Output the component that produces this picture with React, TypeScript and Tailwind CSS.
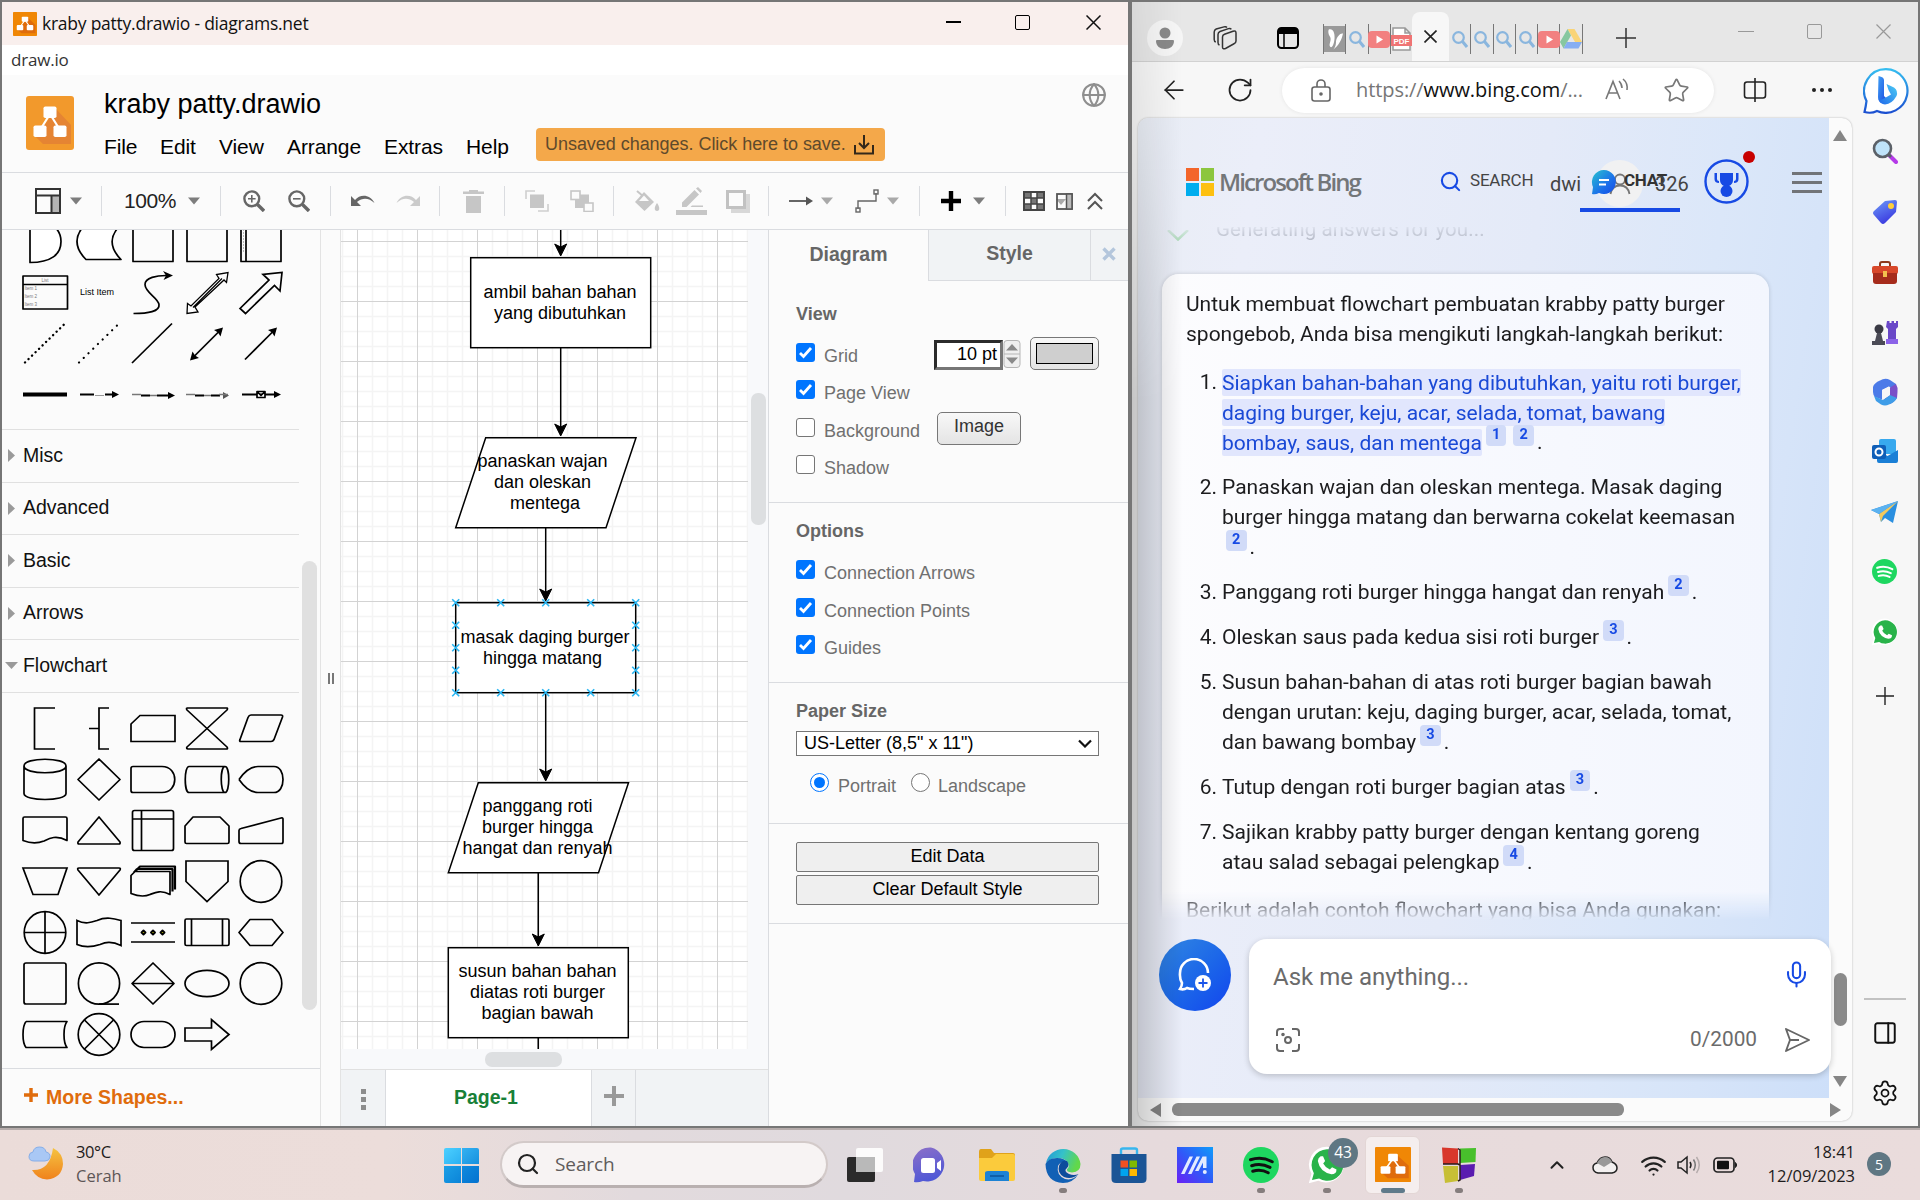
import React from "react";
import {
  Search, X, ArrowLeft, RotateCw, Star, Settings, Wifi, ChevronUp, Mic, PanelRight, Globe,
} from "lucide-react";

type Kids = { children?: React.ReactNode };

/* ---------- shared logo ---------- */

function DrawioLogo({ className, flat }: { className: string; flat?: boolean }) {
  return (
    <svg className={className} viewBox="0 0 48 54" preserveAspectRatio="none">
      <rect width="48" height="54" rx={flat ? 3 : 1.5} fill={flat ? "#f2992c" : "#f08705"} />
      <path d="M30 13 L45 29 V48 H17 L8 39 L20 27 Z" fill={flat ? "#e58433" : "#df6c0c"} />
      <path d="M24 18 L14 34 M24 18 L34 34" stroke="#fff" strokeWidth="2.2" />
      <rect x="17.5" y="10.5" width="13" height="11.5" rx="1.8" fill="#fff" />
      <rect x="7.5" y="29.5" width="13" height="11.5" rx="1.8" fill="#fff" />
      <rect x="27.5" y="29.5" width="13" height="11.5" rx="1.8" fill="#fff" />
    </svg>
  );
}

/* ---------- toolbar ---------- */

function Caret({ className, color = "#7d7d7d" }: { className: string; color?: string }) {
  return (
    <svg className={"h-[8px] w-[12px] shrink-0 " + className} viewBox="0 0 12 8">
      <path d="M0 0.5 H12 L6 7.5 Z" fill={color} />
    </svg>
  );
}

function Sep({ className }: { className: string }) {
  return <div className={"h-[30px] w-px shrink-0 bg-[#dadce0] " + className} />;
}

function Toolbar() {
  return (
    <div className="flex h-[57px] shrink-0 items-center border-b border-[#dadce0] bg-[#fbfbfb]">
      <svg className="ml-[33px] h-[26px] w-[26px] shrink-0" viewBox="0 0 26 26" fill="none" stroke="#333" strokeWidth="2">
        <rect x="17" y="8" width="8" height="17" fill="#b5b5b5" stroke="none" />
        <rect x="1" y="1" width="24" height="24" />
        <path d="M1 7.5 H25 M16.5 7.5 V25" />
      </svg>
      <Caret className="ml-[9px]" />
      <Sep className="ml-[19px]" />
      <span className="ml-[22px] w-[53px] shrink-0 text-[21px] tracking-[-0.4px] text-[#222]">100%</span>
      <Caret className="ml-[11px]" />
      <Sep className="ml-[20px]" />
      <svg className="ml-[22px] h-[22px] w-[22px] shrink-0" viewBox="0 0 22 22" fill="none" stroke="#666" strokeWidth="2.4">
        <circle cx="8.8" cy="8.8" r="7.4" />
        <path d="M14.5 14.5 L21 21" strokeWidth="3.4" />
        <path d="M5 8.8 H12.6 M8.8 5 V12.6" strokeWidth="1.6" />
      </svg>
      <svg className="ml-[23px] h-[22px] w-[22px] shrink-0" viewBox="0 0 22 22" fill="none" stroke="#666" strokeWidth="2.4">
        <circle cx="8.8" cy="8.8" r="7.4" />
        <path d="M14.5 14.5 L21 21" strokeWidth="3.4" />
        <path d="M5 8.8 H12.6" strokeWidth="1.6" />
      </svg>
      <Sep className="ml-[20px]" />
      <svg className="ml-[20px] h-[14px] w-[24px] shrink-0" viewBox="0 0 24 14">
        <path d="M0 2 V12 H10 L6 8 C12 3 18 4 23.5 9 C19 0 9 0 4 6 Z" fill="#666" />
      </svg>
      <svg className="ml-[21px] h-[14px] w-[24px] shrink-0" viewBox="0 0 24 14">
        <path d="M24 2 V12 H14 L18 8 C12 3 6 4 0.5 9 C5 0 15 0 20 6 Z" fill="#cbcbcb" />
      </svg>
      <Sep className="ml-[19px]" />
      <svg className="ml-[23px] h-[23px] w-[21px] shrink-0" viewBox="0 0 21 23">
        <path d="M0 1.5 H6 V0 H15 V1.5 H21 V4 H0 Z M3 6 H18 V23 H3 Z" fill="#c6c6c6" />
      </svg>
      <Sep className="ml-[20px]" />
      <svg className="ml-[20px] h-[22px] w-[24px] shrink-0" viewBox="0 0 24 22" fill="none" stroke="#cfcfcf" strokeWidth="1.6">
        <path d="M1 9 V1 H10 M23 14 V21 H13" />
        <rect x="5" y="4.5" width="14" height="13.5" fill="#c6c6c6" stroke="none" />
      </svg>
      <svg className="ml-[21px] h-[22px] w-[24px] shrink-0" viewBox="0 0 24 22" fill="none" stroke="#c6c6c6" strokeWidth="1.6">
        <rect x="5" y="4.5" width="14" height="13.5" fill="#c6c6c6" stroke="none" />
        <rect x="1" y="1" width="9" height="8.5" fill="#fbfbfb" />
        <rect x="14" y="13" width="9" height="8.5" fill="#fbfbfb" />
      </svg>
      <Sep className="ml-[19px]" />
      <svg className="ml-[21px] h-[24px] w-[25px] shrink-0" viewBox="0 0 25 24" fill="#c6c6c6">
        <path d="M2 2 L9 8" stroke="#c6c6c6" strokeWidth="2" />
        <path d="M9 3 L19 13 L9.5 22 L0 13 Z" />
        <path d="M9 6.5 L14 12 H4 Z" fill="#fbfbfb" />
        <path d="M22 14 C25 18 25 22 22 22 C19 22 19 18 22 14" />
      </svg>
      <svg className="ml-[16px] h-[28px] w-[31px] shrink-0" viewBox="0 0 31 28" fill="#c6c6c6">
        <path d="M6 20 V15.5 L18.5 3 L23 7.5 L10.5 20 Z M20 1.5 L22 0 L26 4 L24.5 6 Z M16 18.5 H27 V20 H14.5 Z" />
        <rect y="23" width="31" height="5" />
      </svg>
      <svg className="ml-[19px] h-[23px] w-[24px] shrink-0" viewBox="0 0 24 23" fill="none">
        <path d="M20 4 H24 V23 H5 V19 H20 Z" fill="#d8d8d8" />
        <rect x="1.5" y="1.5" width="17" height="16" stroke="#c2c2c2" strokeWidth="3" />
      </svg>
      <Sep className="ml-[18px]" />
      <svg className="ml-[20px] h-[10px] w-[24px] shrink-0" viewBox="0 0 24 10">
        <path d="M0 5 H19" stroke="#555" strokeWidth="1.8" />
        <path d="M17 0.5 L24 5 L17 9.5 Z" fill="#555" />
      </svg>
      <Caret className="ml-[8px]" color="#a9a9a9" />
      <svg className="ml-[22px] h-[24px] w-[24px] shrink-0" viewBox="0 0 24 24" fill="none" stroke="#666" strokeWidth="1.4">
        <path d="M3 20 V12 H21 V4" />
        <rect x="1" y="19" width="4" height="4" />
        <rect x="19" y="1" width="4" height="4" />
      </svg>
      <Caret className="ml-[8px]" color="#a9a9a9" />
      <Sep className="ml-[20px]" />
      <svg className="ml-[21px] h-[20px] w-[20px] shrink-0" viewBox="0 0 20 20">
        <path d="M10 0 V20 M0 10 H20" stroke="#000" strokeWidth="4.4" />
      </svg>
      <Caret className="ml-[12px]" />
      <Sep className="ml-[20px]" />
      <svg className="ml-[17px] h-[20px] w-[22px] shrink-0" viewBox="0 0 22 20">
        <rect x="1" y="1" width="20" height="18" fill="#fbfbfb" stroke="#444" strokeWidth="2" />
        <path d="M2 2 H8 V7 H2 Z M14 2 H20 V7 H14 Z M8 7 H14 V13 H8 Z M2 13 H8 V18 H2 Z M14 13 H20 V18 H14 Z" fill="#777" />
        <path d="M8 1 V19 M14 1 V19 M1 7 H21 M1 13 H21" stroke="#444" strokeWidth="1.5" />
      </svg>
      <svg className="ml-[11px] h-[17px] w-[17px] shrink-0" viewBox="0 0 17 17">
        <path d="M0 6 H10 L5 12 Z" fill="#aaa" />
        <rect x="1" y="1" width="15" height="15" fill="none" stroke="#555" strokeWidth="1.8" />
        <path d="M10.5 1 H16 V16 H10.5 Z" fill="#bbb" stroke="#555" strokeWidth="1.5" />
      </svg>
      <svg className="ml-[14px] h-[18px] w-[16px] shrink-0" viewBox="0 0 16 18" fill="none" stroke="#555" strokeWidth="2">
        <path d="M1 9 L8 2 L15 9 M1 17 L8 10 L15 17" />
      </svg>
    </div>
  );
}

/* ---------- shape palette ---------- */

function Cell({ children, w = 1.7 }: Kids & { w?: number }) {
  return (
    <svg className="h-[51px] w-[54px]" viewBox="-27 -25.5 54 51" fill="none" stroke="#000" strokeWidth={w} strokeLinejoin="round">
      {children}
    </svg>
  );
}

function GeneralShapes() {
  return (
    <div className="ml-[15.5px] -mt-[14px] grid grid-cols-[repeat(5,54px)]">
      <Cell><path d="M-15 -21 V21 C6 21 16 13 16 0 C16 -13 6 -21 -15 -21" fill="#fff" /></Cell>
      <Cell><path d="M-13 -18 H23 C10 -6 10 6 22 18 H-13 C-25 6 -25 -6 -13 -18" fill="#fff" /></Cell>
      <Cell><path d="M-20 -20 H20 V20 H-20 Z" /></Cell>
      <Cell><path d="M-20 -20 H20 V20 H-20 Z" /></Cell>
      <Cell>
        <path d="M-20 -20 H20 V20 H-20 Z M-15 -20 V20" />
        <path d="M-17.5 -18 V12" strokeWidth="1" strokeDasharray="1 2" stroke="#777" />
      </Cell>
      <Cell>
        <path d="M-22 -16.5 H22.5 V16.5 H-22 Z M-22 -8 H22.5" />
        <g fill="#777" stroke="none" fontSize="4.5">
          <text x="0" y="-11" textAnchor="middle">List</text>
          <text x="-20.5" y="-2.5">Item 1</text>
          <text x="-20.5" y="5.5">Item 2</text>
          <text x="-20.5" y="13.5">Item 3</text>
        </g>
      </Cell>
      <Cell><text x="-2" y="2.5" textAnchor="middle" fontSize="9" fill="#000" stroke="none">List Item</text></Cell>
      <Cell>
        <path d="M-19.5 21 C-5 21 7 19 6 12 C5 5 -8 0 -8 -8 C-8 -15 4 -17 13 -17" />
        <path d="M20 -17 L10 -21.5 L13 -17 L10.5 -12.5 Z" fill="#000" stroke="none" />
      </Cell>
      <Cell>
        <path d="M-20 21 L-19.5 11 L-16 13.5 L12 -14 L9.5 -18 L21 -20 L19.5 -10 L17 -12.5 L-12 14.5 L-9 19.5 Z M-14 15 L15 -14" strokeWidth="1.3" strokeLinejoin="miter" />
      </Cell>
      <Cell><path d="M-21 16 L8 -12.5 L2 -18 L21 -20 L19 -1.5 L13.5 -7 L-15.5 21 Z" strokeLinejoin="miter" /></Cell>
      <Cell w={2}><path d="M-20 19 L19 -19" strokeDasharray="0.1 4.8" strokeLinecap="round" strokeWidth="2.4" /></Cell>
      <Cell w={2}><path d="M-20 19 L18 -18" strokeDasharray="0.1 6.5" strokeLinecap="round" strokeWidth="2.2" /></Cell>
      <Cell><path d="M-21 19.5 L19 -20" /></Cell>
      <Cell>
        <path d="M-13 13 L13 -13" />
        <path d="M-17 17 L-14.5 8 L-12 12 L-8 14.5 Z M16 -16 L13.5 -7 L11 -11 L7 -13.5 Z" fill="#000" stroke="none" />
      </Cell>
      <Cell>
        <path d="M-16 16 L12 -12" />
        <path d="M16 -16 L13.5 -7 L11 -11 L7 -13.5 Z" fill="#000" stroke="none" />
      </Cell>
      <Cell><path d="M-22 0 H22" strokeWidth="4" /></Cell>
      <Cell>
        <path d="M-19 0 H-5 M6 0 H15" strokeWidth="2" />
        <path d="M20 0 L13 -3.5 V3.5 Z" fill="#000" stroke="none" />
        <path d="M-4 1 H5" stroke="#999" strokeWidth="1" />
      </Cell>
      <Cell>
        <path d="M-12 1 H-3 M4 1 H15" strokeWidth="2" />
        <path d="M22 1 L15 -2.5 V4.5 Z" fill="#000" stroke="none" />
        <path d="M-21 0 H-12 M-3 1 H4" stroke="#777" strokeWidth="1.5" />
      </Cell>
      <Cell>
        <path d="M-12 1 H-3 M4 1 H13" strokeWidth="2" />
        <path d="M22 1 L16 -2.5 V4.5 Z" fill="#555" stroke="none" />
        <path d="M-21 0 H-12 M-3 1 H4 M12 0 H21" stroke="#777" strokeWidth="1.5" />
      </Cell>
      <Cell>
        <path d="M-19 0 H14" strokeWidth="2" />
        <path d="M20 0 L13 -3.5 V3.5 Z" fill="#000" stroke="none" />
        <path d="M-4 -3 H4 V3 H-4 Z M-4 -3 L0 1 L4 -3" fill="#fff" />
      </Cell>
    </div>
  );
}

function FlowchartShapes() {
  return (
    <div className="ml-[15.7px] mt-[9.5px] grid grid-cols-[repeat(5,54px)]">
      <Cell><path d="M10 -20.5 H-10.5 V20.5 H10" strokeLinejoin="miter" /></Cell>
      <Cell><path d="M10 -20.5 H0 V20.5 H10 M-10 0 H0" strokeLinejoin="miter" /></Cell>
      <Cell><path d="M-13 -13 H22 V13 H-22 V-4.5 Z" strokeLinejoin="miter" /></Cell>
      <Cell><path d="M-20 -20.5 H20 Q21 -20 20 -18.5 L-20 18.5 Q-21 20 -19 20.5 H20 Q21 20 20 18.5 L-20 -18.5 Q-21 -20 -20 -20.5" /></Cell>
      <Cell><path d="M-10 -13.5 H20 Q22 -13.5 21.5 -11.5 L13 11 Q12 13 10 13 H-20 Q-22 13 -21 11 L-13 -11 Q-12 -13.5 -10 -13.5" /></Cell>

      <Cell><path d="M-21 -13.5 C-21 -22.5 21 -22.5 21 -13.5 V14 C21 22 -21 22 -21 14 Z M-21 -13.5 C-21 -4.5 21 -4.5 21 -13.5" /></Cell>
      <Cell><path d="M0 -20.5 L21 0 L0 20.5 L-21 0 Z" /></Cell>
      <Cell><path d="M-20 -13 H9 C26 -13 26 13 9 13 H-20 Q-22 13 -22 11 V-11 Q-22 -13 -20 -13" /></Cell>
      <Cell><path d="M-18 -13 H18 C23 -13 23 13 18 13 H-18 C-23 13 -23 -13 -18 -13 M18 -13 C13 -13 13 13 18 13" /></Cell>
      <Cell><path d="M-22 0 Q-13 -13 -3 -13 H13 C25 -13 25 13 13 13 H-3 Q-13 13 -22 0" /></Cell>

      <Cell><path d="M-20.5 -13.5 H20.5 Q22 -13.5 22 -12 V10 C11 4 4 8 -1 10.5 C-10 14 -17 12 -22 10 V-12 Q-22 -13.5 -20.5 -13.5" /></Cell>
      <Cell><path d="M0 -13.5 L21 11.5 Q21.5 13.5 20 13.5 H-20 Q-21.5 13.5 -21 11.5 Z" /></Cell>
      <Cell><path d="M-18.5 -20 H18.5 Q20.5 -20 20.5 -18 V18 Q20.5 20 18.5 20 H-18.5 Q-20.5 20 -20.5 18 V-18 Q-20.5 -20 -18.5 -20 M-11.5 -20 V20 M-20.5 -11.5 H20.5" /></Cell>
      <Cell><path d="M-14 -13.5 H13 L22 -4.5 V11.5 Q22 13 20.5 13 H-20.5 Q-22 13 -22 11.5 V-4.5 Z" /></Cell>
      <Cell><path d="M-20 -2 L20 -12.5 Q22 -13 22 -11.5 V11 Q22 13 20.5 13 H-20 Q-22 13 -22 11 V0 Q-22 -1.5 -20 -2" /></Cell>

      <Cell><path d="M-22 -13.5 H22 L13 13 H-12 Z" strokeLinejoin="miter" /></Cell>
      <Cell><path d="M-20 -13.5 H20 Q22 -13.5 21 -11.5 L0 13.5 L-21 -11.5 Q-22 -13.5 -20 -13.5" /></Cell>
      <Cell>
        <path d="M-17 -11 L-13 -15 H22 V8 M-19 -9 L-16 -12.5 H19.5 V10" strokeWidth="2.2" />
        <path d="M-18 -10 H17 V13 C8 8 2 11 -3 13 C-10 16 -17 14 -22 12 V-6 Z" fill="#fbfbfb" />
      </Cell>
      <Cell><path d="M-21 -20.5 H21 V0 L0 20 L-21 0 Z" strokeLinejoin="miter" /></Cell>
      <Cell><circle r="20.8" /></Cell>

      <Cell><circle r="20.8" /><path d="M-20.8 0 H20.8 M0 -20.8 V20.8" /></Cell>
      <Cell><path d="M-22 -12 C-14 -8 -8 -10 -2 -12 C7 -16 15 -14 22 -12 V13 C12 8 6 10 1 12 C-8 15 -15 15 -22 12 Z" strokeLinejoin="miter" /></Cell>
      <Cell>
        <path d="M-22 -9.5 H22 M-22 9.5 H22" />
        <path d="M-9.5 -2 L-7.5 0 L-9.5 2 L-11.5 0 Z M0 -2 L2 0 L0 2 L-2 0 Z M9.5 -2 L11.5 0 L9.5 2 L7.5 0 Z" fill="#aeb000" strokeWidth="1.9" />
      </Cell>
      <Cell><path d="M-20.5 -13.5 H20.5 Q22 -13.5 22 -12 V11.5 Q22 13 20.5 13 H-20.5 Q-22 13 -22 11.5 V-12 Q-22 -13.5 -20.5 -13.5 M-15.5 -13.5 V13 M15.5 -13.5 V13" /></Cell>
      <Cell><path d="M-11 -13 H11 L22 0 L11 13 H-11 L-22 0 Z" /></Cell>

      <Cell><rect x="-21" y="-20.5" width="42" height="41" rx="2" /></Cell>
      <Cell><circle r="20.6" /><path d="M0 20.6 H20" /></Cell>
      <Cell><path d="M0 -20.5 L21 0 L0 20.5 L-21 0 Z M-21 0 H21" /></Cell>
      <Cell><ellipse rx="22" ry="13.2" /></Cell>
      <Cell><circle r="20.8" /></Cell>

      <Cell><path d="M-19 -13 H22 C18 -8 18 8 22 13 H-19 C-23 8 -23 -8 -19 -13" /></Cell>
      <Cell><circle r="20.8" /><path d="M-14.5 -14.5 L14.5 14.5 M14.5 -14.5 L-14.5 14.5" /></Cell>
      <Cell><rect x="-22" y="-13" width="44" height="26" rx="13" /></Cell>
      <Cell><path d="M-22 -6.5 H4.5 V-15 L22 0 L4.5 15 V6.5 H-22 Z" strokeLinejoin="miter" /></Cell>
    </div>
  );
}

function Section({ label, className, open }: { label: string; className: string; open?: boolean }) {
  return (
    <div className={"flex w-[297px] items-center border-t border-[#e0e0e0] pb-px " + className}>
      <svg className="ml-[3px] h-[13px] w-[13px]" viewBox="0 0 13 13">
        <path d={open ? "M0 3 H13 L6.5 10 Z" : "M3 0 L10 6.5 L3 13 Z"} fill="#9a9a9a" />
      </svg>
      <span className="ml-[5px] text-[19.5px] tracking-[-0.05px] text-[#111]">{label}</span>
    </div>
  );
}

function ShapeSidebar() {
  return (
    <div className="flex w-[319px] shrink-0 flex-col border-r border-[#e3e3e3] bg-[#fbfbfb]">
      <div className="flex h-[838px] shrink-0">
        <div className="w-[300px] overflow-hidden">
          <div className="flex h-[199px] items-start">
            <GeneralShapes />
          </div>
          <Section label="Misc" className="h-[53px]" />
          <Section label="Advanced" className="h-[52px]" />
          <Section label="Basic" className="h-[53px]" />
          <Section label="Arrows" className="h-[52px]" />
          <Section label="Flowchart" className="h-[53px]" open />
          <div className="w-[297px] border-t border-[#e0e0e0]">
            <FlowchartShapes />
          </div>
        </div>
        <div className="mt-[331px] h-[449px] w-[15px] rounded-full bg-[#e0e0e0]" />
      </div>
      <div className="flex grow items-center border-t border-[#dadce0] pl-[22px] text-[#e06c0c]">
        <svg className="mb-[5px] h-[14px] w-[14px]" viewBox="0 0 14 14">
          <path d="M7 0 V14 M0 7 H14" stroke="#e06c0c" strokeWidth="3.4" />
        </svg>
        <span className="ml-[8px] text-[19.5px] font-bold">More Shapes...</span>
      </div>
    </div>
  );
}

/* ---------- diagram canvas ---------- */

const connectionPoints: [number, number][] = [
  [0, 0], [45, 0], [90, 0], [135, 0], [180, 0],
  [0, 22.5], [0, 45], [0, 67.5], [180, 22.5], [180, 45], [180, 67.5],
  [0, 90], [45, 90], [90, 90], [135, 90], [180, 90],
];

function Arrow({ x, y1, y2 }: { x: number; y1: number; y2: number }) {
  return (
    <g>
      <path d={`M${x} ${y1} V${y2 - 8}`} stroke="#000" strokeWidth="1.5" />
      <path d={`M${x} ${y2 - 1} L${x - 6} ${y2 - 13} L${x} ${y2 - 10} L${x + 6} ${y2 - 13} Z`} fill="#000" stroke="#000" />
    </g>
  );
}

function Lines({ items }: { items: [string, number, number][] }) {
  return (
    <>
      {items.map(([t, x, y]) => (
        <text key={t} x={x} y={y} textAnchor="middle" fontSize="18" fill="#000">{t}</text>
      ))}
    </>
  );
}

function Canvas() {
  return (
    <svg className="h-[819px] w-[407px] bg-white" viewBox="341 230 407 819">
      <defs>
        <pattern id="grid" x="357" y="241" width="60" height="60" patternUnits="userSpaceOnUse">
          <path d="M15.5 0 V60 M30.5 0 V60 M45.5 0 V60 M0 15.5 H60 M0 30.5 H60 M0 45.5 H60" stroke="#f4f4f4" strokeWidth="1.5" fill="none" />
          <path d="M0.5 0 V60 M0 0.5 H60" stroke="#d3d3d3" fill="none" />
        </pattern>
      </defs>
      <rect x="341" y="230" width="407" height="819" fill="url(#grid)" />
      <g fill="#fff" stroke="#000" strokeWidth="1.5">
        <rect x="470.7" y="257.7" width="180" height="90" />
        <path d="M485.7 437.7 H636 L606 527.7 H455.7 Z" />
        <rect x="455.7" y="602.7" width="180" height="90" />
        <path d="M478.3 782.7 H628.5 L598.5 872.7 H448.3 Z" />
        <rect x="448.3" y="947.7" width="180" height="90" />
      </g>
      <Arrow x={560.7} y1={230} y2={257} />
      <Arrow x={560.7} y1={348} y2={437} />
      <Arrow x={545.7} y1={528} y2={602} />
      <Arrow x={545.7} y1={693} y2={782} />
      <Arrow x={538.3} y1={873} y2={947} />
      <path d="M538.3 1038 V1049" stroke="#000" strokeWidth="1.5" />
      <Lines
        items={[
          ["ambil bahan bahan", 560, 298],
          ["yang dibutuhkan", 560, 319],
          ["panaskan wajan", 542.5, 467],
          ["dan oleskan", 542.5, 488],
          ["mentega", 545, 509],
          ["masak daging burger", 545, 643],
          ["hingga matang", 542.5, 664],
          ["panggang roti", 537.5, 812],
          ["burger hingga", 537.5, 833],
          ["hangat dan renyah", 537.5, 854],
          ["susun bahan bahan", 537.5, 977],
          ["diatas roti burger", 537.5, 998],
          ["bagian bawah", 537.5, 1019],
        ]}
      />
      <g stroke="#29b6f2" strokeWidth="1.6">
        {connectionPoints.map(([x, y]) => (
          <path key={`${x}-${y}`} d={`M${x + 452.2} ${y + 599.2} l7 7 m0 -7 l-7 7`} />
        ))}
      </g>
    </svg>
  );
}

function DiagramArea() {
  return (
    <div className="flex w-[427px] shrink-0 flex-col bg-[#f8f9fb]">
      <div className="flex h-[819px] shrink-0">
        <Canvas />
        <div className="ml-[3px] mt-[163px] h-[132px] w-[15px] rounded-[7px] bg-[#dddfe1]" />
      </div>
      <div className="h-[20px] shrink-0 pt-[3px]">
        <div className="ml-[144px] h-[15px] w-[77px] rounded-[7px] bg-[#dddfe1]" />
      </div>
      <div className="flex grow items-stretch border-t border-[#e0e0e0] bg-[#f1f3f5]">
        <div className="flex w-[45px] flex-col items-center justify-center gap-[3px] border-r border-[#dadce0] pt-[3px]">
          <div className="size-[5px] bg-[#8d8d8d]" />
          <div className="size-[5px] bg-[#8d8d8d]" />
          <div className="size-[5px] bg-[#8d8d8d]" />
        </div>
        <div className="flex w-[206px] items-center justify-center border-r border-[#dadce0] bg-white pr-[5px] text-[19.5px] font-bold text-[#188038]">
          Page-1
        </div>
        <div className="flex w-[44px] items-center justify-center border-r border-[#dadce0]">
          <svg className="mb-[4px] size-[20px]" viewBox="0 0 20 20">
            <path d="M10 0 V20 M0 10 H20" stroke="#999" strokeWidth="4" />
          </svg>
        </div>
      </div>
    </div>
  );
}

/* ---------- format panel ---------- */

function Check({ on, label, className }: { on?: boolean; label: string; className: string }) {
  return (
    <div className={"flex h-[24px] items-start " + className}>
      {on ? (
        <svg className="size-[19px] shrink-0" viewBox="0 0 19 19">
          <rect width="19" height="19" rx="3" fill="#0075ff" />
          <path d="M4 10 L7.5 13.5 L15 5" fill="none" stroke="#fff" strokeWidth="2.8" />
        </svg>
      ) : (
        <div className="size-[19px] shrink-0 rounded-[3px] border-[1.5px] border-[#767676] bg-white" />
      )}
      <span className="ml-[9px] mt-[2px] text-[18px] leading-[22px] text-[#707070]">{label}</span>
    </div>
  );
}

function Heading({ children, className }: Kids & { className: string }) {
  return <div className={"h-[22px] text-[18px] font-bold leading-[22px] text-[#666] " + className}>{children}</div>;
}

function FormatPanel() {
  return (
    <div className="flex w-[360px] shrink-0 flex-col border-l border-[#dadce0] bg-[#fbfbfb]">
      <div className="flex h-[51px] text-[19.5px] font-bold text-[#666]">
        <div className="flex w-[159px] items-center justify-center pb-[2px]">Diagram</div>
        <div className="flex w-[162px] items-center justify-center border-b border-l border-[#dadce0] bg-[#f1f3f5] pb-[3px]">Style</div>
        <div className="flex grow items-center justify-center border-b border-l border-[#dadce0] bg-[#f1f3f5] pr-[2px]">
          <svg className="mb-[3px] size-[14px]" viewBox="0 0 14 14">
            <path d="M1.5 1.5 L12.5 12.5 M12.5 1.5 L1.5 12.5" stroke="#b4c6dc" strokeWidth="3.4" />
          </svg>
        </div>
      </div>
      <div className="h-[222px] border-b border-[#dadce0] pl-[27px]">
        <Heading className="mt-[22px]">View</Heading>
        <div className="mt-[12px] flex items-start">
          <Check on label="Grid" className="mt-[6px] w-[138px]" />
          <div className="mt-[3px] flex h-[30px] w-[69px] items-center justify-end border-[3px] border-[#767676] border-l-[#2b2b2b] border-t-[#2b2b2b] bg-white pb-[2px] pr-[3px] text-[18px] text-black">
            10 pt
          </div>
          <svg className="mt-[3px] h-[28px] w-[18px]" viewBox="0 0 18 28">
            <rect x="1" y="0.5" width="16" height="27" rx="3" fill="#efefef" stroke="#b5b5b5" />
            <path d="M1 14 H17" stroke="#b5b5b5" />
            <path d="M3 10.5 L9 4 L15 10.5 Z M3 17.5 L9 24 L15 17.5 Z" fill="#8a8a8a" />
          </svg>
          <div className="ml-[9px] flex h-[33px] w-[69px] items-center justify-center rounded-[5px] border border-[#777] bg-linear-to-b from-[#f8f8f8] to-[#e4e4e4]">
            <div className="h-[21px] w-[57px] border border-black bg-[#cfcfcf]" />
          </div>
        </div>
        <Check on label="Page View" className="mt-[10px]" />
        <div className="mt-[8px] flex items-start">
          <Check label="Background" className="mt-[6px] w-[141px]" />
          <div className="flex h-[33px] w-[84px] items-center justify-center rounded-[5px] border border-[#777] bg-linear-to-b from-[#f8f8f8] to-[#e4e4e4] pb-[5px] text-[18px] text-[#333]">
            Image
          </div>
        </div>
        <Check label="Shadow" className="mt-[10px]" />
      </div>
      <div className="h-[180px] border-b border-[#dadce0] pl-[27px]">
        <Heading className="mt-[17px]">Options</Heading>
        <Check on label="Connection Arrows" className="mt-[18px]" />
        <Check on label="Connection Points" className="mt-[14px]" />
        <Check on label="Guides" className="mt-[13px]" />
      </div>
      <div className="h-[141px] border-b border-[#dadce0] pl-[27px]">
        <Heading className="mt-[17px]">Paper Size</Heading>
        <div className="mt-[9px] flex h-[25px] w-[303px] items-center justify-between border border-[#767676] bg-white pl-[7px] pr-[6px] text-[18px] text-black">
          <span>US-Letter (8,5" x 11")</span>
          <svg className="h-[9px] w-[14px]" viewBox="0 0 14 9">
            <path d="M1 1.5 L7 7.5 L13 1.5" fill="none" stroke="#111" strokeWidth="2.2" />
          </svg>
        </div>
        <div className="mt-[17px] flex h-[24px] items-start text-[18px] leading-[22px] text-[#707070]">
          <div className="ml-[14px] flex size-[19px] items-center justify-center rounded-full border-[1.5px] border-[#0075ff] bg-white">
            <div className="size-[11px] rounded-full bg-[#0075ff]" />
          </div>
          <span className="ml-[9px] mt-[2px] w-[73px]">Portrait</span>
          <div className="size-[19px] rounded-full border border-[#767676] bg-white" />
          <span className="ml-[8px] mt-[2px]">Landscape</span>
        </div>
      </div>
      <div className="h-[100px] border-b border-[#dadce0] pl-[27px] pt-[18px] text-[18px] text-black">
        <div className="flex h-[30px] w-[303px] items-center justify-center rounded-[2px] border border-[#767676] bg-[#efefef] pb-[2px]">Edit Data</div>
        <div className="mt-[3px] flex h-[30px] w-[303px] items-center justify-center rounded-[2px] border border-[#767676] bg-[#efefef] pb-[2px]">Clear Default Style</div>
      </div>
    </div>
  );
}

/* ---------- drawio window ---------- */

function DrawioWindow() {
  return (
    <div className="flex h-[1128px] w-[1130px] shrink-0 flex-col overflow-hidden border-2 border-[#767676] bg-[#fbfbfb] font-['Liberation_Sans',Arial,sans-serif]">
      <div className="flex h-[43px] shrink-0 items-center bg-[#f9efed] font-['Open_Sans',sans-serif]">
        <DrawioLogo className="ml-[11px] size-[24px] shrink-0" />
        <span className="ml-[5px] w-[892px] shrink-0 pb-px text-[17.5px] tracking-[-0.24px] text-[#111]">kraby patty.drawio - diagrams.net</span>
        <div className="mb-[3px] ml-[12px] h-[1.5px] w-[15px] shrink-0 bg-black" />
        <div className="mb-[2px] ml-[54px] size-[15px] shrink-0 rounded-[2px] border-[1.5px] border-black" />
        <svg className="mb-[2px] ml-[56px] size-[15px] shrink-0" viewBox="0 0 15 15">
          <path d="M0.5 0.5 L14.5 14.5 M14.5 0.5 L0.5 14.5" stroke="#111" strokeWidth="1.5" />
        </svg>
      </div>
      <div className="flex h-[30px] shrink-0 items-center bg-white pl-[9px] font-['Open_Sans',sans-serif] text-[17px] tracking-[-0.2px] text-[#333]">draw.io</div>
      <div className="flex h-[98px] shrink-0 border-b border-[#dadce0]">
        <DrawioLogo className="ml-[24px] mt-[21px] h-[54px] w-[48px]" flat />
        <div className="ml-[30px] flex-1">
          <div className="mt-[13px] h-[32px] text-[27px] leading-[32px] text-black">kraby patty.drawio</div>
          <div className="mt-[8px] flex h-[33px] items-center text-[21px] tracking-[-0.1px] text-black">
            <span className="mt-[4px] w-[56px]">File</span>
            <span className="mt-[4px] w-[59px]">Edit</span>
            <span className="mt-[4px] w-[68px]">View</span>
            <span className="mt-[4px] w-[97px]">Arrange</span>
            <span className="mt-[4px] w-[82px]">Extras</span>
            <span className="mt-[4px] w-[70px]">Help</span>
            <div className="flex h-[33px] w-[349px] items-center rounded-[4px] bg-[#f4a84a] pl-[9px] text-[18px] tracking-[-0.04px] text-[#5f4a2c]">
              <span className="w-[309px] shrink-0 pb-px">Unsaved changes. Click here to save.</span>
              <svg className="size-[20px] shrink-0" viewBox="0 0 20 20" fill="none" stroke="#33281a" strokeWidth="2">
                <path d="M1 10 V18.5 H19 V10 M10 0 V12.5 M5 8 L10 13 L15 8" />
              </svg>
            </div>
          </div>
        </div>
        <Globe className="mr-[21px] mt-[7px] size-[26px] text-[#8f8f8f]" strokeWidth={1.9} />
      </div>
      <Toolbar />
      <div className="flex min-h-0 flex-1">
        <ShapeSidebar />
        <div className="flex w-[20px] shrink-0 items-center justify-center gap-[2px] border-r border-[#e3e3e3] bg-[#fbfbfb] pl-px">
          <div className="h-[11px] w-[2px] bg-[#777]" />
          <div className="h-[11px] w-[2px] bg-[#777]" />
        </div>
        <DiagramArea />
        <FormatPanel />
      </div>
    </div>
  );
}

/* ---------- browser chrome ---------- */

function TabIcon({ kind }: { kind: string }) {
  switch (kind) {
    case "site":
      return (
        <svg className="h-[26px] w-[22px] shrink-0" viewBox="0 0 22 24" preserveAspectRatio="none">
          <rect width="22" height="24" fill="#9a9a9a" />
          <path d="M5 3 C10 2 11 8 10.500 12 C10 17 8 21 6 19 C4.500 17 8 13 6 10 C4 7 4 4 5 3 M12 14 C13 9 17 6 19 7 C18 12 15 18 9 22 C12 19 12 16 12 14" fill="#fff" />
        </svg>
      );
    case "search":
      return (
        <svg className="h-[17px] w-[16px] shrink-0" viewBox="0 0 16 17" fill="none" stroke="#8ab6de">
          <circle cx="6.500" cy="6.500" r="5.300" strokeWidth="2.200" />
          <path d="M10.500 10.500 L15 16" strokeWidth="3" />
        </svg>
      );
    case "video":
      return (
        <svg className="h-[17px] w-[22px] shrink-0" viewBox="0 0 22 17">
          <rect width="22" height="17" rx="4" fill="#f28080" />
          <path d="M8.5 4.5 L15 8.5 L8.5 12.5 Z" fill="#fff" />
        </svg>
      );
    case "pdf":
      return (
        <svg className="h-[24px] w-[21px] shrink-0" viewBox="0 0 21 24">
          <path d="M2 1 H14 L19 6 V23 H2 Z M14 1 V6 H19" fill="#fff" stroke="#999" strokeWidth="1.5" />
          <rect y="8" width="21" height="11" fill="#ef7474" />
          <text x="10.5" y="16.5" textAnchor="middle" fontSize="8" fontWeight="700" fill="#fff">PDF</text>
        </svg>
      );
    default:
      return (
        <svg className="h-[20px] w-[22px] shrink-0" viewBox="0 0 22 20">
          <path d="M7.5 0 H14.5 L22 13 H15 Z" fill="#f9d477" />
          <path d="M7.5 0 L0 13 L3.5 19.5 L11 6.5 Z" fill="#86c7a0" />
          <path d="M3.5 19.5 H18.5 L22 13 H7 Z" fill="#86aef2" />
        </svg>
      );
  }
}

function TabStrip() {
  return (
    <div className="flex h-[60px] shrink-0 items-center border-b border-[#d2d2d2] bg-[#e7e7e7] font-['Liberation_Sans',Arial,sans-serif]">
      <div className="ml-[15px] mt-[13px] flex size-[36px] shrink-0 items-center justify-center rounded-full bg-[#f6f6f6]">
        <svg className="size-[22px]" viewBox="0 0 22 22" fill="#8a8a8a">
          <circle cx="11" cy="6" r="5.5" />
          <path d="M3 13 H19 Q20 13 20 14 C20 19 16 22 11 22 C6 22 2 19 2 14 Q2 13 3 13" />
        </svg>
      </div>
      <svg className="ml-[30px] mt-[12px] size-[24px]" viewBox="0 0 24 24" fill="none" stroke="#333" strokeWidth="1.5">
        <path d="M9.500 11 Q9.500 9 11.500 8.300 L20 5.200 Q23 4.300 23 7 V15 Q23 17 21 17.800 L12.500 22.500 Q9.500 23.500 9.500 21 Z" />
        <path d="M6.500 19 Q5 18.500 5 16.500 V8.500 Q5 6.300 7 5.500 L15.500 2.600 Q17.500 2 18.300 3.300 M2.800 16 Q1.200 15.500 1.200 13.500 V6 Q1.200 3.800 3.200 3 L11 0.900 Q13 0.400 14 1.500" />
      </svg>
      <svg className="ml-[40px] mt-[12px] h-[22px] w-[22px]" viewBox="0 0 22 22">
        <rect x="1" y="1" width="20" height="20" rx="3.5" fill="none" stroke="#000" strokeWidth="2" />
        <path d="M1 4 Q1 1 4 1 H18 Q21 1 21 4 V7 H1 Z" fill="#000" />
        <path d="M7 7 V21" stroke="#000" strokeWidth="1.5" />
      </svg>
      <div className="ml-[24px] mt-[15px] flex h-[30px] w-[89px]">
        {["site", "search", "video", "pdf"].map((k) => (
          <div key={k} className="flex w-[22.3px] items-center justify-center border-l-[1.5px] border-[#777]">
            <TabIcon kind={k} />
          </div>
        ))}
      </div>
      <div className="flex h-[49px] w-[37px] items-center justify-center self-end rounded-t-[8px] bg-[#f7f7f7]">
        <svg className="size-[13px]" viewBox="0 0 13 13">
          <path d="M0.500 0.500 L12.500 12.500 M12.500 0.500 L0.500 12.500" stroke="#222" strokeWidth="1.600" />
        </svg>
      </div>
      <div className="mt-[15px] flex h-[30px] w-[134px]">
        {["search", "search", "search", "search", "video", "drive"].map((k, i) => (
          <div key={i} className="flex w-[22.3px] items-center justify-center border-r-[1.5px] border-[#777]">
            <TabIcon kind={k} />
          </div>
        ))}
      </div>
      <svg className="ml-[33px] mt-[13px] size-[20px]" viewBox="0 0 20 20">
        <path d="M10 0 V20 M0 10 H20" stroke="#333" strokeWidth="1.5" />
      </svg>
      <div className="ml-[102px] mb-px h-px w-[16px] bg-[#999]" />
      <div className="ml-[53px] mb-px size-[15px] rounded-[2px] border border-[#999]" />
      <svg className="ml-[54px] mb-px size-[15px]" viewBox="0 0 15 15">
        <path d="M0.5 0.5 L14.5 14.5 M14.5 0.5 L0.5 14.5" stroke="#999" strokeWidth="1.2" />
      </svg>
    </div>
  );
}

function BingBubble() {
  return (
    <svg className="h-[46px] w-[46px]" viewBox="0 0 46 46">
      <defs>
        <linearGradient id="bb" x1="0" y1="0" x2="0" y2="1">
          <stop offset="0" stopColor="#35bdf0" />
          <stop offset="1" stopColor="#1b4fd0" />
        </linearGradient>
        <linearGradient id="bl" x1="0" y1="0" x2="1" y2="1">
          <stop offset="0" stopColor="#3fa0f5" />
          <stop offset="1" stopColor="#1b4ae0" />
        </linearGradient>
        <linearGradient id="br" x1="1" y1="0" x2="0" y2="1">
          <stop offset="0" stopColor="#4ccdf4" />
          <stop offset="1" stopColor="#2068ea" />
        </linearGradient>
      </defs>
      <path d="M23 1.2 A21.8 21.8 0 1 1 14 43 C10 45 5 45 1.5 44 C2.5 40 3 37 3.5 33 A21.8 21.8 0 0 1 23 1.2" fill="#fff" stroke="url(#bb)" strokeWidth="2.2" />
      <path d="M15.500 8 Q21 9 21 12 V28 L23 30 L18 35 Q15 33 15 29 Z" fill="url(#bl)" />
      <path d="M23.500 16 L31 19.500 Q35.500 23 33.500 28 Q29 36 22 36.500 Q17 36 15.500 31 Q18 32.500 21 30.500 L28 26.500 L25.500 22 Z" fill="url(#br)" />
    </svg>
  );
}

function AddressRow() {
  return (
    <div className="flex h-[56px] shrink-0 items-center bg-[#f7f7f7]">
      <ArrowLeft className="ml-[27px] size-[30px] shrink-0 text-[#222]" strokeWidth={1.4} />
      <RotateCw className="ml-[37px] size-[28px] shrink-0 text-[#222]" strokeWidth={1.5} />
      <div className="ml-[28px] flex h-[45px] w-[432px] shrink-0 items-center rounded-full bg-white shadow-[0_0_4px_rgba(0,0,0,0.08)]">
        <svg className="ml-[29px] h-[23px] w-[20px] shrink-0" viewBox="0 0 20 23" fill="none" stroke="#666" strokeWidth="1.6">
          <rect x="1" y="8" width="18" height="14" rx="2.5" />
          <path d="M6 8 V5 A4 4 0 0 1 14 5 V8" />
          <circle cx="10" cy="15" r="1" fill="#666" />
        </svg>
        <span className="ml-[25px] w-[249px] shrink-0 whitespace-nowrap font-['Open_Sans',sans-serif] text-[20px] tracking-[-0.08px] text-[#767676]">
          https://<span className="text-[#111]">www.bing.com</span>/...
        </span>
        <svg className="h-[24px] w-[24px] shrink-0" viewBox="0 0 24 24" fill="none" stroke="#777" strokeWidth="1.6">
          <path d="M1 21 L8 3.5 L15 21 M3.5 15 H12.5 M14 3 Q17 6 17 10 M18 1 Q23 5 22 12" />
        </svg>
        <Star className="ml-[34px] size-[27px] shrink-0 text-[#777]" strokeWidth={1.5} />
      </div>
      <svg className="ml-[29px] h-[24px] w-[24px] shrink-0" viewBox="0 0 24 24" fill="none" stroke="#222" strokeWidth="1.6">
        <path d="M9 4 H4 Q1.5 4 1.5 6.5 V17.5 Q1.5 20 4 20 H9 M15 4 H20 Q22.5 4 22.5 6.5 V17.5 Q22.5 20 20 20 H15 M12 0 V24 M12 4 H9 M12 20 H9 M12 4 H15 M12 20 H15" />
      </svg>
      <div className="ml-[45px] flex shrink-0 gap-[4px]">
        <div className="size-[4px] rounded-full bg-[#222]" />
        <div className="size-[4px] rounded-full bg-[#222]" />
        <div className="size-[4px] rounded-full bg-[#222]" />
      </div>
      <div className="ml-[31px] mt-px shrink-0"><BingBubble /></div>
    </div>
  );
}

/* ---------- bing chat page ---------- */

function BingHeader() {
  return (
    <div className="relative flex h-[109px] shrink-0 items-start">
      <div className="ml-[48px] mt-[50px] grid size-[28px] shrink-0 grid-cols-2 gap-[1.5px]">
        <div className="bg-[#f3652a]" />
        <div className="bg-[#8cc63e]" />
        <div className="bg-[#00adee]" />
        <div className="bg-[#fdc010]" />
      </div>
      <span className="ml-[5px] mt-[47px] w-[220px] shrink-0 whitespace-nowrap font-['Open_Sans',sans-serif] text-[24px] font-semibold leading-[34px] tracking-[-1.9px] text-[#737679]">
        Microsoft Bing
      </span>
      <Search className="mt-[52px] size-[23px] shrink-0 text-[#174ae4]" strokeWidth={2.2} />
      <span className="ml-[8px] mt-[52px] text-[17px] leading-[20px] tracking-[-0.2px] text-[#444]">SEARCH</span>
      <div className="absolute left-[442px] top-[90px] h-[4px] w-[100px] bg-[#174ae4]" />
      <div className="absolute left-[458px] top-[42px] flex size-[47px] items-center justify-center rounded-full bg-[#f1f1f2]">
        <svg className="h-[22px] w-[22px]" viewBox="0 0 22 22" fill="none" stroke="#777" strokeWidth="1.8">
          <circle cx="11" cy="6.5" r="5" />
          <path d="M1.5 21 Q3 12.5 11 12.5 Q19 12.5 20.5 21" />
        </svg>
      </div>
      <svg className="absolute left-[453px] top-[52px] size-[25px]" viewBox="0 0 25 25">
        <defs>
          <linearGradient id="ch" x1="0" y1="0" x2="1" y2="1">
            <stop offset="0" stopColor="#28c3cf" />
            <stop offset="0.6" stopColor="#1b70ea" />
            <stop offset="1" stopColor="#174ae4" />
          </linearGradient>
        </defs>
        <path d="M13 0 A12 12 0 1 1 8 23 Q4 25 1 24 L2 17 A12 12 0 0 1 13 0" fill="url(#ch)" />
        <path d="M8 10 H18 M8 14.5 H15" stroke="#fff" strokeWidth="2" />
      </svg>
      <span className="absolute left-[412px] top-[54px] text-[20px] leading-[24px] text-[#444]">dwi</span>
      <span className="absolute left-[486px] top-[52px] text-[17px] font-bold leading-[20px] tracking-[-0.3px] text-[#333]">CHAT</span>
      <span className="absolute left-[517px] top-[54px] text-[20px] leading-[24px] text-[#444]">326</span>
      <svg className="absolute left-[566px] top-[41px] size-[45px]" viewBox="0 0 45 45" fill="#174ae4">
        <circle cx="22.5" cy="22.5" r="21" fill="none" stroke="#174ae4" strokeWidth="2.4" />
        <path d="M16 14 H29 V21 Q29 25 25 27 V28 H20 V27 Q16 25 16 21 Z M10.500 14 H13 V20 Q13 22 15 22 V24 Q10.500 24 10.500 20 Z M34.500 14 H32 V20 Q32 22 30 22 V24 Q34.500 24 34.500 20 Z" />
        <circle cx="22.5" cy="32" r="6" />
      </svg>
      <div className="absolute left-[605px] top-[33px] size-[12px] rounded-full bg-[#c80000]" />
      <div className="absolute left-[654px] top-[54px] flex w-[30px] flex-col gap-[6px]">
        <div className="h-[3px] bg-[#717478]" />
        <div className="h-[3px] bg-[#717478]" />
        <div className="h-[3px] bg-[#717478]" />
      </div>
    </div>
  );
}

function Cite({ n }: { n: number }) {
  return (
    <span className="relative -top-[8px] ml-[4px] mr-[3px] inline-block h-[21px] w-[20.5px] rounded-[4px] bg-[#d1dbf8] text-center align-middle text-[14.5px] font-bold leading-[20px] text-[#174ae4]">
      {n}
    </span>
  );
}

function Item({ n, children }: Kids & { n: number }) {
  return (
    <li className="mb-[15px] flex">
      <span className="mr-[5px] w-[31px] shrink-0 text-right">{n}.</span>
      <div className="whitespace-nowrap">{children}</div>
    </li>
  );
}

function Mark({ children }: Kids) {
  return <span className="box-decoration-clone rounded-[2px] bg-[#e1e6fd] py-[1.5px] text-[#1a49d6]">{children}</span>;
}

function ChatLog() {
  return (
    <div className="h-[693px] shrink-0 overflow-hidden [mask-image:linear-gradient(to_bottom,rgba(0,0,0,0.2)_0px,black_16px,black_664px,transparent_693px)]">
      <div className="flex h-[47px] items-start">
        <svg className="ml-[29px] mt-[3px] h-[11px] w-[22px]" viewBox="0 0 22 11">
          <path d="M1 0 L11 9.5 L21 0" fill="none" stroke="#a9d8b4" strokeWidth="2.5" />
        </svg>
        <span className="-mt-[13px] ml-[27px] text-[20.5px] leading-[30px] tracking-[0.1px] text-[#adb2bf]">Generating answers for you...</span>
      </div>
      <div className="ml-[24px] h-[700px] w-[607px] rounded-[17px] bg-linear-to-r from-[#fcfcfe] to-[#f3f6fe] pl-[24px] pt-[15px] text-[21px] leading-[30px] text-[#1c1c1e] shadow-[0_0_4px_rgba(0,0,0,0.16)]">
        <p className="whitespace-nowrap">
          Untuk membuat flowchart pembuatan krabby patty burger
          <br />
          spongebob, Anda bisa mengikuti langkah-langkah berikut:
        </p>
        <ol className="mt-[18px]">
          <Item n={1}>
            <Mark>Siapkan bahan-bahan yang dibutuhkan, yaitu roti burger,<br />daging burger, keju, acar, selada, tomat, bawang<br />bombay, saus, dan mentega</Mark>
            <Cite n={1} /><Cite n={2} />.
          </Item>
          <Item n={2}>
            Panaskan wajan dan oleskan mentega. Masak daging<br />burger hingga matang dan berwarna cokelat keemasan<br /><Cite n={2} />.
          </Item>
          <Item n={3}>Panggang roti burger hingga hangat dan renyah<Cite n={2} />.</Item>
          <Item n={4}>Oleskan saus pada kedua sisi roti burger<Cite n={3} />.</Item>
          <Item n={5}>
            Susun bahan-bahan di atas roti burger bagian bawah<br />dengan urutan: keju, daging burger, acar, selada, tomat,<br />dan bawang bombay<Cite n={3} />.
          </Item>
          <Item n={6}>Tutup dengan roti burger bagian atas<Cite n={3} />.</Item>
          <Item n={7}>
            Sajikan krabby patty burger dengan kentang goreng<br />atau salad sebagai pelengkap<Cite n={4} />.
          </Item>
        </ol>
        <p className="mt-[18px] whitespace-nowrap">Berikut adalah contoh flowchart yang bisa Anda gunakan:</p>
      </div>
    </div>
  );
}

function Composer() {
  return (
    <div className="flex grow items-start pt-[19px]">
      <div className="ml-[21px] flex size-[72px] shrink-0 items-center justify-center rounded-full bg-linear-to-br from-[#2a7be4] from-20% to-[#1742ee]">
        <svg className="h-[34px] w-[34px]" viewBox="0 0 34 34" fill="none" stroke="#fff" strokeWidth="2.6">
          <path d="M16 31 Q11 31 9 30 Q6 32 2 31 Q4 28 4 25 Q1.5 21 2 15 A14 14 0 0 1 30 15" />
          <circle cx="25" cy="25" r="8" fill="#fff" stroke="none" />
          <path d="M25 20.5 V29.5 M20.5 25 H29.5" stroke="#1b55ea" strokeWidth="1.8" />
        </svg>
      </div>
      <div className="relative z-10 -mr-[3px] ml-[18px] flex h-[135px] w-[582px] shrink-0 flex-col justify-between rounded-[18px] bg-white pb-[18px] pl-[24px] pr-[20px] pt-[20px] shadow-[0_2px_6px_rgba(0,0,0,0.2)]">
        <div className="flex h-[36px] items-center justify-between">
          <span className="text-[24px] text-[#6b6b6b]">Ask me anything...</span>
          <Mic className="mb-[6px] size-[29px] text-[#174ae4]" strokeWidth={1.7} />
        </div>
        <div className="flex h-[32px] items-center">
          <svg className="ml-[3px] size-[24px] shrink-0" viewBox="0 0 24 24" fill="none" stroke="#666" strokeWidth="2">
            <path d="M1 8 V4 Q1 1 4 1 H8 M16 1 H20 Q23 1 23 4 V8 M23 16 V20 Q23 23 20 23 H16 M8 23 H4 Q1 23 1 20 V16" />
            <circle cx="12" cy="12" r="3" />
            <circle cx="7" cy="6.5" r="0.8" fill="#666" />
          </svg>
          <span className="ml-[390px] w-[95px] shrink-0 text-[20.8px] text-[#6b6b6b]">0/2000</span>
          <svg className="h-[24px] w-[25px] shrink-0" viewBox="0 0 25 24" fill="none" stroke="#666" strokeWidth="1.9" strokeLinejoin="round">
            <path d="M1 1 L24 12 L1 23 L5 12 Z M5 12 H14" />
          </svg>
        </div>
      </div>
    </div>
  );
}

function WebView() {
  return (
    <div className="ml-[6px] flex h-[1003px] w-[714px] flex-col overflow-hidden rounded-[10px] bg-[#fbfbfb] font-['Roboto',sans-serif] shadow-[0_0_2px_rgba(0,0,0,0.3)]">
      <div className="flex h-[980px] shrink-0">
        <div className="flex w-[691px] shrink-0 flex-col bg-[linear-gradient(98deg,#e9edf5_0%,#ebeef9_15%,#e4eaf8_50%,#dbe7f9_72%,#d6e4f9_84%,#cddff9_100%)]">
          <BingHeader />
          <ChatLog />
          <Composer />
        </div>
        <div className="flex w-[22px] flex-col items-center">
          <svg className="mt-[12px] h-[11px] w-[14px]" viewBox="0 0 14 11"><path d="M7 0 L14 11 H0 Z" fill="#868686" /></svg>
          <div className="mt-[832px] h-[53px] w-[13px] rounded-full bg-[#8a8a8a]" />
          <svg className="mt-[50px] h-[11px] w-[14px]" viewBox="0 0 14 11"><path d="M7 11 L14 0 H0 Z" fill="#868686" /></svg>
        </div>
      </div>
      <div className="flex h-[23px] items-center">
        <svg className="ml-[12px] h-[14px] w-[11px]" viewBox="0 0 11 14"><path d="M0 7 L11 0 V14 Z" fill="#868686" /></svg>
        <div className="ml-[11px] h-[13px] w-[452px] rounded-[6px] bg-[#8a8a8a]" />
        <svg className="ml-[206px] h-[14px] w-[11px]" viewBox="0 0 11 14"><path d="M11 7 L0 0 V14 Z" fill="#868686" /></svg>
      </div>
    </div>
  );
}

/* ---------- edge sidebar ---------- */

function Spotify({ className }: { className: string }) {
  return (
    <svg className={className} viewBox="0 0 24 24">
      <circle cx="12" cy="12" r="12" fill="#1ed760" />
      <path d="M5 8.500 Q12.500 6 19.500 9.800 M5.800 12.500 Q12 10.500 18 13.600 M6.500 16.200 Q12 14.500 16.800 17.200" fill="none" stroke="#111" strokeWidth="2" strokeLinecap="round" />
    </svg>
  );
}

function SpotifyLight({ className }: { className: string }) {
  return (
    <svg className={className} viewBox="0 0 24 24">
      <circle cx="12" cy="12" r="12" fill="#1ed760" />
      <path d="M5 8.500 Q12.500 6 19.500 9.800 M5.800 12.500 Q12 10.500 18 13.600 M6.500 16.200 Q12 14.500 16.800 17.200" fill="none" stroke="#fff" strokeWidth="2" strokeLinecap="round" />
    </svg>
  );
}

function WhatsApp({ className }: { className: string }) {
  return (
    <svg className={className} viewBox="0 0 24 24">
      <path d="M12 0.5 A11.3 11.3 0 1 1 6.5 22 L0.5 23.5 L2.2 17.5 A11.3 11.3 0 0 1 12 0.5" fill="#fff" />
      <path d="M12 2 A10 10 0 1 1 7 20.5 L2.5 21.5 L3.7 17.2 A10 10 0 0 1 12 2" fill="#29b34a" />
      <path d="M8 6.500 L9.500 6.500 L10.800 9.500 L9.600 11 Q11 13.700 13.800 14.800 L15.200 13.400 L18 14.800 Q18 17.800 14.800 17.800 Q7.500 16.500 6.200 9.500 Q6.300 7.500 8 6.500" fill="#fff" />
    </svg>
  );
}

function EdgeSidebar() {
  return (
    <div className="flex w-[65px] shrink-0 flex-col items-center">
      <svg className="mt-[20px] size-[26px] shrink-0" viewBox="0 0 26 26">
        <path d="M16 16 L24 24" stroke="#b53ae8" strokeWidth="4" strokeLinecap="round" />
        <path d="M15 15 L19 19" stroke="#5b6168" strokeWidth="3" />
        <circle cx="10.5" cy="10.5" r="8.5" fill="#bfe3f9" stroke="#5b6168" strokeWidth="2.6" />
      </svg>
      <svg className="mt-[35px] h-[26px] w-[26px] shrink-0" viewBox="0 0 26 26">
        <defs><linearGradient id="tag" x1="0" y1="0" x2="0.5" y2="1"><stop offset="0" stopColor="#6f9df8" /><stop offset="1" stopColor="#3b3be0" /></linearGradient></defs>
        <path d="M13 2 L23 1 Q25 1 25 3 L24 13 L13 24 Q11 26 9 24 L2 16 Q0 14 2 12 Z" fill="url(#tag)" />
        <circle cx="19" cy="7" r="3" fill="#ffcf3a" />
      </svg>
      <svg className="mt-[36px] h-[23px] w-[26px] shrink-0" viewBox="0 0 26 23">
        <path d="M8 6 V3 Q8 1 10 1 H16 Q18 1 18 3 V6" fill="none" stroke="#8d3a1d" strokeWidth="2" />
        <rect x="0" y="5" width="26" height="8" rx="2" fill="#d8482a" />
        <path d="M1 12 H25 V20 Q25 23 22 23 H4 Q1 23 1 20 Z" fill="#a62c1c" />
        <rect x="11" y="10" width="4" height="6" fill="#f4c04e" />
      </svg>
      <svg className="mt-[34px] size-[28px] shrink-0" viewBox="0 0 28 28">
        <path d="M16 3 H18.5 V5 H20.5 V3 H23 V5 H25 V3 H27 V9 L25 11 V21 H17 V11 L15 9 Z" fill="#6a48c8" />
        <path d="M15 21 H27 V26 H15 Z" fill="#8b63e8" />
        <circle cx="8" cy="11" r="4.5" fill="#3a3a44" />
        <path d="M6 15 H10 L12 23 H14 V27 H1 V23 H4 Z" fill="#4b4b56" />
      </svg>
      <svg className="mt-[32px] size-[28px] shrink-0" viewBox="0 0 28 28">
        <path d="M9 2.500 Q14 -0.500 19 2 L25 6 V13 L18 8.500 L11 12 V21.500 L4 19 Q2 17 2 14 V9 Q3 5 9 2.500" fill="#4c7be8" />
        <path d="M25 6 Q27 9 26.500 14 L26 20 Q23 24 19 26 L12 22 L19 17 V9.500 Z" fill="#7a50c8" />
        <path d="M3 18 L12 22 L19 17 L26 20 Q24 24 18 26.500 Q14 28.500 10 26.500 L5 23 Z" fill="#3f9de8" />
        <path d="M11 12 L18 8.500 L19 17 L12 21.500 Z" fill="#f7f7f7" />
      </svg>
      <svg className="mt-[32px] h-[26px] w-[26px] shrink-0" viewBox="0 0 26 26">
        <rect x="7" y="1" width="17" height="15" rx="2" fill="#38a9ee" />
        <path d="M5 12 L15.5 18 L26 12 V23 Q26 25 24 25 H7 Q5 25 5 23 Z" fill="#1a7fd6" />
        <rect x="0" y="7" width="14" height="14" rx="2" fill="#0f5fb8" />
        <circle cx="7" cy="14" r="3.5" fill="none" stroke="#fff" strokeWidth="2" />
      </svg>
      <svg className="mt-[36px] h-[24px] w-[27px] shrink-0" viewBox="0 0 27 24">
        <path d="M0 10 L27 1 L22 23 L14 18 L10 22 L8 14 Z" fill="#2a8fe0" />
        <path d="M8 14 L27 1 L12 16 L10 22 Z" fill="#f3c95e" />
        <path d="M0 10 L27 1 L8 14 Z" fill="#5bb2f0" />
      </svg>
      <SpotifyLight className="mt-[35px] size-[25px] shrink-0" />
      <WhatsApp className="mt-[34px] size-[28px] shrink-0" />
      <svg className="mt-[41px] size-[18px] shrink-0" viewBox="0 0 18 18"><path d="M9 0 V18 M0 9 H18" stroke="#222" strokeWidth="1.4" /></svg>
      <div className="mt-[293px] h-[2px] w-[42px] shrink-0 bg-[#c2c2c2]" />
      <PanelRight className="mt-[20px] size-[26px] shrink-0 text-[#111]" strokeWidth={1.8} />
      <Settings className="mt-[33px] size-[28px] shrink-0 text-[#111]" strokeWidth={1.5} />
    </div>
  );
}

function EdgeWindow() {
  return (
    <div className="relative flex h-[1128px] w-[790px] flex-col overflow-hidden border-2 border-[#767676] bg-[#f7f7f7]">
      <TabStrip />
      <AddressRow />
      <div className="flex min-h-0 flex-1">
        <WebView />
        <EdgeSidebar />
      </div>
      <div className="pointer-events-none absolute left-0 top-0 h-full w-[50px] bg-linear-to-r from-black/20 to-transparent [mask-image:linear-gradient(to_bottom,rgba(0,0,0,0.3),rgba(0,0,0,0.4)_120px,black_400px)]" />
    </div>
  );
}

/* ---------- taskbar ---------- */

function AppSlot({ className, dot, children }: Kids & { className: string; dot?: boolean }) {
  return (
    <div className={"relative flex h-[36px] shrink-0 items-center justify-center " + className}>
      {children}
      {dot && <div className="absolute -bottom-[10px] left-1/2 h-[5px] w-[8px] -translate-x-1/2 rounded-full bg-[#857d7d]" />}
    </div>
  );
}

function Taskbar() {
  return (
    <div className="flex h-[72px] items-center border-t-2 border-[#b6acab] bg-[linear-gradient(90deg,#ebdcd9_0%,#ecddda_20%,#e2dadd_33%,#e0dade_44%,#e6dadc_60%,#eadcdc_100%)] font-['Open_Sans',sans-serif]">
      <svg className="mb-[4px] ml-[28px] h-[36px] w-[36px] shrink-0" viewBox="0 0 36 36">
        <defs>
          <linearGradient id="moon" x1="0" y1="0" x2="0" y2="1"><stop offset="0" stopColor="#f5c342" /><stop offset="1" stopColor="#f0821c" /></linearGradient>
        </defs>
        <path d="M25 3 Q35 8 35 19 Q34 33 19 34.5 Q9 34 4 25 Q22 26 25 3" fill="url(#moon)" />
        <path d="M6 16 Q1 16 1 11.5 Q1 7.5 5 7 Q6 2 11.5 2 Q17 2 18 7 Q22.5 8 22 12 Q21.5 16 17 16 Z" fill="#a9c8f5" stroke="#86aee8" />
      </svg>
      <div className="mb-[2px] ml-[12px] w-[368px] shrink-0 text-[16.5px] leading-[24px] tracking-[-0.4px]">
        <div className="text-[#1d1b1b]">30°C</div>
        <div className="tracking-[0px] text-[#5d5656]">Cerah</div>
      </div>
      <AppSlot className="w-[35px]">
        <div className="grid size-[35px] grid-cols-2 gap-[1.5px]">
          <div className="rounded-tl-[2px] bg-linear-to-br from-[#4cd0ff] to-[#2ab0f2]" />
          <div className="rounded-tr-[2px] bg-linear-to-br from-[#33b2f2] to-[#1690de]" />
          <div className="rounded-bl-[2px] bg-linear-to-br from-[#1c9fe6] to-[#0b84d8]" />
          <div className="rounded-br-[2px] bg-linear-to-br from-[#0f8ade] to-[#0572cf]" />
        </div>
      </AppSlot>
      <div className="mb-px ml-[21px] flex h-[47px] w-[328px] shrink-0 items-center rounded-full border-2 border-b-[3px] border-[#d3cac9] border-b-[#b9b0b0] bg-[#f7f3f3]">
        <Search className="ml-[14px] size-[24px] text-[#222]" strokeWidth={2.2} />
        <span className="ml-[15px] text-[19px] tracking-[-0.1px] text-[#5f5b5b]">Search</span>
      </div>
      <AppSlot className="ml-[19px] w-[36px]">
        <svg className="size-[36px]" viewBox="0 0 36 36">
          <rect x="0" y="10" width="28" height="25" rx="2" fill="#2a2a2a" />
          <rect x="9" y="1" width="27" height="24" rx="2" fill="#fff" fillOpacity="0.88" />
          <rect x="9" y="10" width="19" height="15" fill="#b9b9b9" />
        </svg>
      </AppSlot>
      <AppSlot className="ml-[30px] w-[36px]">
        <svg className="size-[36px]" viewBox="0 0 36 36">
          <defs><linearGradient id="tm" x1="0" y1="0" x2="0.3" y2="1"><stop offset="0" stopColor="#8d70c8" /><stop offset="1" stopColor="#5058d6" /></linearGradient></defs>
          <path d="M18 0.5 A17 17 0 1 1 10 34 Q5 36 1 35 L2 27 A17.5 17.5 0 0 1 18 0.5" fill="url(#tm)" />
          <rect x="8" y="11" width="14" height="15" rx="2.5" fill="#fff" />
          <path d="M24 16 L28 13 V24 L24 21 Z" fill="#fff" />
        </svg>
      </AppSlot>
      <AppSlot className="ml-[30px] w-[36px]">
        <svg className="size-[36px]" viewBox="0 0 36 36">
          <path d="M0 5 Q0 2 2 2 H12 L15 6 H34 Q36 6 36 8 V16 H0 Z" fill="#e0a21a" />
          <path d="M0 11 H13 L17 7 H34 Q36 7 36 9 V32 Q36 34 34 34 H2 Q0 34 0 32 Z" fill="#fbcb3c" />
          <path d="M6 34 V26 Q6 24 9 24 H27 Q30 24 30 26 V34 Z" fill="#1c82d4" />
          <path d="M11 29 H25" stroke="#0f5fa8" strokeWidth="2" />
        </svg>
      </AppSlot>
      <AppSlot className="ml-[30px] w-[36px]" dot>
        <svg className="size-[36px]" viewBox="0 0 36 36">
          <defs>
            <linearGradient id="ed" x1="0" y1="0" x2="1" y2="0.3"><stop offset="0" stopColor="#2397d8" /><stop offset="0.5" stopColor="#35c1c9" /><stop offset="1" stopColor="#62d84a" /></linearGradient>
          </defs>
          <path d="M1 16 A17.5 17.5 0 0 1 35.5 17 Q35.5 25 27 25.5 Q21 25 22 22 Q25 20 23 16 Q20 11 13 11 Q5 11 1 16" fill="url(#ed)" />
          <path d="M0.5 17 Q3 11 12 11 Q20 11 22.5 16 Q16 13 13 19 Q11 28 20 32 Q28 34 33.5 27 Q28 36 18 36 Q1 35 0.5 17" fill="#1160b5" />
          <path d="M22 14 Q16 13 14 19 Q12 26 19 30 Q27 33 33.5 27 Q29 29 24 27 Q18 24 22 21 Q25 18 22 14" fill="#0d4c9c" />
        </svg>
      </AppSlot>
      <AppSlot className="ml-[30px] w-[36px]">
        <svg className="size-[36px]" viewBox="0 0 36 36">
          <path d="M10 8 V3 Q10 1.500 12 1.500 H24 Q26 1.500 26 3 V8" fill="none" stroke="#38b6ee" strokeWidth="2.4" />
          <path d="M0.5 7 H35.5 V32 Q35.5 36 31 36 H5 Q0.5 36 0.5 32 Z" fill="#1b5596" />
          <path d="M9.5 13.5 H17 V20.5 H9.5 Z" fill="#f25022" /><path d="M18.5 13.5 H26 V20.5 H18.5 Z" fill="#7fba00" />
          <path d="M9.5 22 H17 V29 H9.5 Z" fill="#00a4ef" /><path d="M18.5 22 H26 V29 H18.5 Z" fill="#ffb900" />
        </svg>
      </AppSlot>
      <AppSlot className="ml-[30px] w-[36px]">
        <svg className="size-[36px]" viewBox="0 0 36 36">
          <defs><linearGradient id="ma" x1="1" y1="0" x2="0" y2="1"><stop offset="0" stopColor="#0f9cfa" /><stop offset="0.5" stopColor="#2f5af8" /><stop offset="1" stopColor="#6a20f5" /></linearGradient></defs>
          <rect width="36" height="36" fill="url(#ma)" />
          <path d="M4 27 L12.500 9.500 H16 L7.500 27 Z M11 27 L19.500 9.500 H23 L14.500 27 Z M18 24 L25.500 9.500 H29.500 V21 H26 V15.500 L21.500 24 Z" fill="#e3ebff" />
          <circle cx="27.800" cy="25" r="2" fill="#e3ebff" />
        </svg>
      </AppSlot>
      <AppSlot className="ml-[30px] w-[36px]" dot><Spotify className="size-[36px]" /></AppSlot>
      <AppSlot className="ml-[30px] w-[36px]" dot>
        <WhatsApp className="size-[38px] shrink-0" />
        <div className="absolute -right-[13px] -top-[9px] flex size-[30px] items-center justify-center rounded-full bg-[#5f7783] text-[15.5px] text-white">43</div>
      </AppSlot>
      <div className="ml-[20px] flex h-[58px] w-[55px] shrink-0 flex-col items-center rounded-[6px] border border-[#e3d6d5] bg-[#f5eeee]">
        <DrawioLogo className="mt-[10px] size-[36px]" />
        <div className="mt-[6px] h-[5px] w-[24px] rounded-full bg-[#5f7a8a]" />
      </div>
      <AppSlot className="ml-[21px] w-[36px]" dot>
        <svg className="size-[36px]" viewBox="0 0 36 36">
          <path d="M1 0.5 L17 1.5 V17 H2 Z" fill="#d8372c" />
          <path d="M19 1.5 L35 1 L34.5 15 L19 16 Z" fill="#48c02c" />
          <path d="M2 19 L17 19 V34 L4 36 Z" fill="#c7bf35" />
          <path d="M19 18 L34 17 L33 29 L19 33 Z" fill="#5a1cb0" />
          <path d="M17 1.5 L19 3 V33 L17 34 M2 17 H17 L19 18" fill="none" stroke="#2b1b1b" strokeWidth="1.5" />
        </svg>
      </AppSlot>
      <ChevronUp className="ml-[69px] size-[22px] shrink-0 text-[#222]" strokeWidth={2.2} />
      <svg className="ml-[24px] h-[18px] w-[26px] shrink-0" viewBox="0 0 26 18">
        <path d="M6 17 Q1 16 1 11.5 Q1 8 5 7 Q8 1 13 1 Q18 1 20 6 Q25 8 25 12 Q25 16 20 17 Z" fill="#f3f0f0" stroke="#222" strokeWidth="1.5" />
        <path d="M5 7 Q8 1 13 1 Q18 1 20 6 L12 11 Z" fill="#999" />
      </svg>
      <Wifi className="ml-[22px] size-[27px] shrink-0 text-[#222]" strokeWidth={2} />
      <svg className="ml-[10px] h-[20px] w-[24px] shrink-0" viewBox="0 0 24 20" fill="none" stroke="#222" strokeWidth="1.5">
        <path d="M1 7 H4 L10 2 V18 L4 13 H1 Z M13 7 Q15 10 13 13" />
        <path d="M16.5 4.5 Q20 10 16.5 15.5" stroke="#777" />
        <path d="M19.5 2 Q25 10 19.5 18" stroke="#b5acac" />
      </svg>
      <svg className="ml-[12px] h-[16px] w-[25px] shrink-0" viewBox="0 0 25 16">
        <rect x="1" y="1" width="20" height="14" rx="3.5" fill="none" stroke="#222" strokeWidth="1.7" />
        <rect x="4" y="3.8" width="12" height="8.5" rx="1" fill="#111" />
        <path d="M22.5 5.5 Q25 8 22.5 10.5 Z" fill="#222" stroke="#222" />
      </svg>
      <div className="mb-[2px] ml-[6px] w-[111px] shrink-0 text-right text-[16.5px] leading-[24px] tracking-[-0.02px] text-[#1d1b1b]">
        <div>18:41</div>
        <div>12/09/2023</div>
      </div>
      <div className="mb-[2px] ml-[12px] flex size-[24px] shrink-0 items-center justify-center rounded-full bg-[#5f7783] text-[14px] text-white">5</div>
    </div>
  );
}

export default function App() {
  return (
    <div className="h-[1200px] w-[1920px] overflow-hidden">
      <div className="flex h-[1128px]">
        <DrawioWindow />
        <EdgeWindow />
      </div>
      <Taskbar />
    </div>
  );
}
